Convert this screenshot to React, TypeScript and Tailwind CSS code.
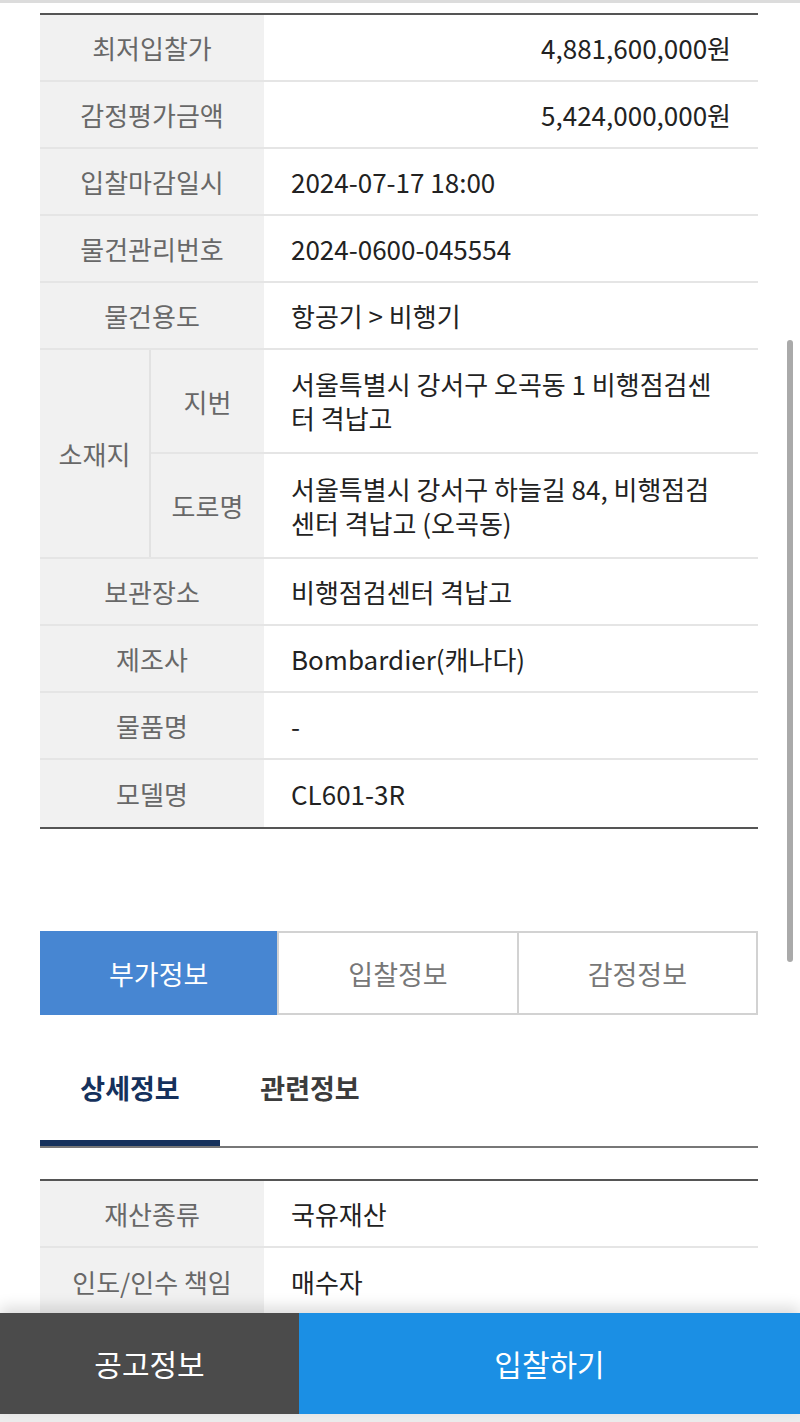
import type { ReactNode } from 'react';

function Row({ label, children, right, last }: { label: string; children: ReactNode; right?: boolean; last?: boolean }) {
  return (
    <div className={`flex h-[67px] ${last ? '' : 'border-b-2 border-[#e5e5e5]'}`}>
      <div className="flex w-[224px] shrink-0 items-center justify-center bg-[#f1f1f1] text-[#686868]">{label}</div>
      <div className={`flex flex-1 items-center px-[27px] text-[#222] ${right ? 'justify-end' : ''}`}>{children}</div>
    </div>
  );
}

export default function App() {
  return (
    <div className="relative min-h-screen bg-white pb-[110px] font-['Noto_Sans_CJK_KR','Noto_Sans',sans-serif] text-[26px] leading-[33px]">
      <div className="h-[3px] bg-[#dcdcdc]" />

      <div className="ml-[40px] mr-[42px]">
        {/* 기본정보 */}
        <div className="mt-[10px] border-y-2 border-[#555]">
          <Row label="최저입찰가" right>4,881,600,000원</Row>
          <Row label="감정평가금액" right>5,424,000,000원</Row>
          <Row label="입찰마감일시">2024-07-17 18:00</Row>
          <Row label="물건관리번호">2024-0600-045554</Row>
          <Row label="물건용도">항공기 &gt; 비행기</Row>

          <div className="flex border-b-2 border-[#e5e5e5]">
            <div className="flex w-[111px] shrink-0 items-center justify-center border-r-2 border-[#e2e2e2] bg-[#f1f1f1] text-[#686868]">
              소재지
            </div>
            <div className="flex-1">
              <div className="flex h-[104px] border-b-2 border-[#e5e5e5]">
                <div className="flex w-[113px] shrink-0 items-center justify-center bg-[#f1f1f1] text-[#686868]">지번</div>
                <div className="flex flex-1 items-center whitespace-nowrap pl-[27px] leading-[34px] text-[#222]">
                  서울특별시 강서구 오곡동 1 비행점검센<br />터 격납고
                </div>
              </div>
              <div className="flex h-[103px]">
                <div className="flex w-[113px] shrink-0 items-center justify-center bg-[#f1f1f1] text-[#686868]">도로명</div>
                <div className="flex flex-1 items-center whitespace-nowrap pl-[27px] leading-[34px] text-[#222]">
                  서울특별시 강서구 하늘길 84, 비행점검<br />센터 격납고 (오곡동)
                </div>
              </div>
            </div>
          </div>

          <Row label="보관장소">비행점검센터 격납고</Row>
          <Row label="제조사">Bombardier(캐나다)</Row>
          <Row label="물품명">-</Row>
          <Row label="모델명" last>CL601-3R</Row>
        </div>

        {/* 탭 */}
        <div className="mt-[102px] flex h-[84px] text-[27px]">
          <button className="flex-1 bg-[#4786d2] text-white">부가정보</button>
          <button className="flex-1 border-2 border-[#d2d2d2] text-[#777]">입찰정보</button>
          <button className="flex-1 border-y-2 border-r-2 border-[#d2d2d2] text-[#777]">감정정보</button>
        </div>

        <div className="mt-[30px] flex border-b-2 border-[#777] text-[27px] font-bold">
          <div className="h-[101px] w-[180px] border-b-[6px] border-[#15315c] pt-[26px] text-center text-[#15315c]">상세정보</div>
          <div className="h-[101px] w-[180px] pt-[26px] text-center text-[#3c3c3c]">관련정보</div>
        </div>

        <div className="mt-[31px] border-t-2 border-[#555]">
          <Row label="재산종류">국유재산</Row>
          <Row label="인도/인수 책임" last>매수자</Row>
        </div>
      </div>

      {/* 스크롤바 */}
      <div className="fixed right-[7px] top-[340px] h-[622px] w-[6px] rounded-full bg-[#aaa]" />

      {/* 하단 버튼 */}
      <div className="fixed inset-x-0 bottom-0 bg-[#ececec] pb-[8px]">
        <div className="flex h-[101px] text-[30px] text-white shadow-[0_-6px_14px_rgba(0,0,0,0.14)]">
          <button className="w-[299px] bg-[#4b4b4b]">공고정보</button>
          <button className="flex-1 bg-[#1b8fe4]">입찰하기</button>
        </div>
      </div>
    </div>
  );
}
